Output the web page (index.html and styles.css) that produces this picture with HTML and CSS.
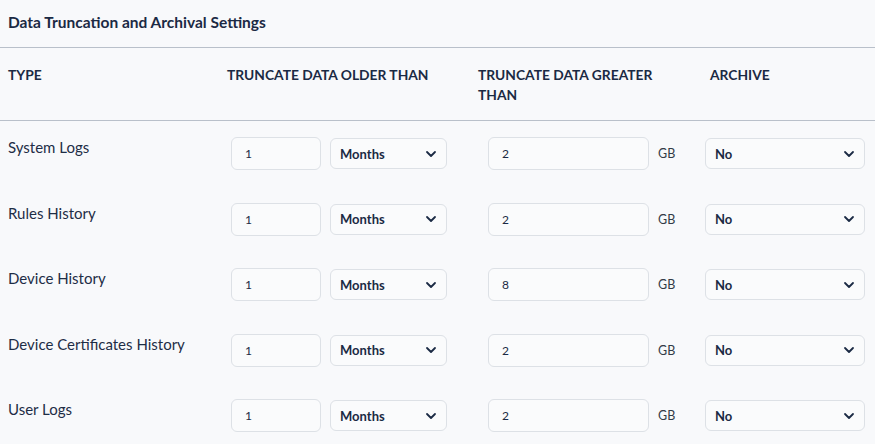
FILE: index.html
```html
<!DOCTYPE html>
<html lang="en">
<head>
    <meta charset="UTF-8">
    <meta name="viewport" content="width=device-width, initial-scale=1.0">
    <title>Data Truncation and Archival Settings</title>
    <link rel="stylesheet" href="styles.css">
</head>
<body>

    <div class="panel">
        <h3 class="panel-title">Data Truncation and Archival Settings</h3>

        <div class="grid head">
            <div class="th">Type</div>
            <div class="th">Truncate Data Older Than</div>
            <div class="th th-wrap">Truncate Data Greater Than</div>
            <div class="th">Archive</div>
        </div>

        <div class="rows" id="rows"></div>
    </div>

    <script>
        const items = [
            { name: 'System Logs', age: 1, size: 2 },
            { name: 'Rules History', age: 1, size: 2 },
            { name: 'Device History', age: 1, size: 8 },
            { name: 'Device Certificates History', age: 1, size: 2 },
            { name: 'User Logs', age: 1, size: 2 }
        ];

        const chevron = '<svg class="chev" viewBox="0 0 12 12" width="12" height="12"><path d="M2 4 L6 8 L10 4" fill="none" stroke="#1b2a44" stroke-width="1.8" stroke-linecap="round" stroke-linejoin="round"/></svg>';

        document.getElementById('rows').innerHTML = items.map(item => `
            <div class="grid row">
                <div class="name">${item.name}</div>
                <div class="cell cell-age">
                    <div class="field small">${item.age}</div>
                    <div class="select months"><span>Months</span>${chevron}</div>
                </div>
                <div class="cell cell-size">
                    <div class="field wide">${item.size}</div>
                    <span class="unit">GB</span>
                </div>
                <div class="cell cell-archive">
                    <div class="select archive"><span>No</span>${chevron}</div>
                </div>
            </div>
        `).join('');
    </script>

</body>
</html>
```

FILE: styles.css
```css
body { margin: 0; font-family: Lato, "Open Sans", sans-serif; background-color: #f8f9fb; color: #1b2a44; }
.panel { width: 875px; }
.panel-title { margin: 0; height: 48px; line-height: 45px; padding: 0 8px; font-size: 15.5px; font-weight: 700; border-bottom: 1px solid #b9c0ca; box-sizing: border-box; }
.grid { display: grid; grid-template-columns: 219px 251px 232px 1fr; padding: 0 8px; }
.head { height: 73px; padding-top: 17px; box-sizing: border-box; border-bottom: 1px solid #b9c0ca; }
.th { font-size: 13.8px; font-weight: 700; text-transform: uppercase; line-height: 20px; }
.th-wrap { max-width: 200px; }
.row { padding: 16px 8px 0; height: 65.5px; box-sizing: border-box; }
.name { font-size: 15px; line-height: 20px; color: #1e2d46; }
.cell { display: flex; align-items: center; height: 33px; }
.cell-age { padding-left: 4px; gap: 9px; }
.cell-size { padding-left: 10px; gap: 9px; }
.cell-archive { margin-left: -5px; }
.field { height: 33px; box-sizing: border-box; border: 1px solid #dde1e6; border-radius: 6px; background: #fafbfc; font-size: 12px; line-height: 31px; padding-left: 13px; color: #1b2a44; }
.field.small { width: 90px; }
.field.wide { width: 161px; }
.unit { font-size: 12.5px; color: #333b47; }
.select { height: 31px; box-sizing: border-box; border: 1px solid #dde1e6; border-radius: 6px; background: #fafbfc; display: flex; align-items: center; justify-content: space-between; padding: 0 9px 0 9px; font-size: 13px; font-weight: 700; }
.select.months { width: 117px; }
.select.archive { width: 160px; }
.chev { display: block; }
```
